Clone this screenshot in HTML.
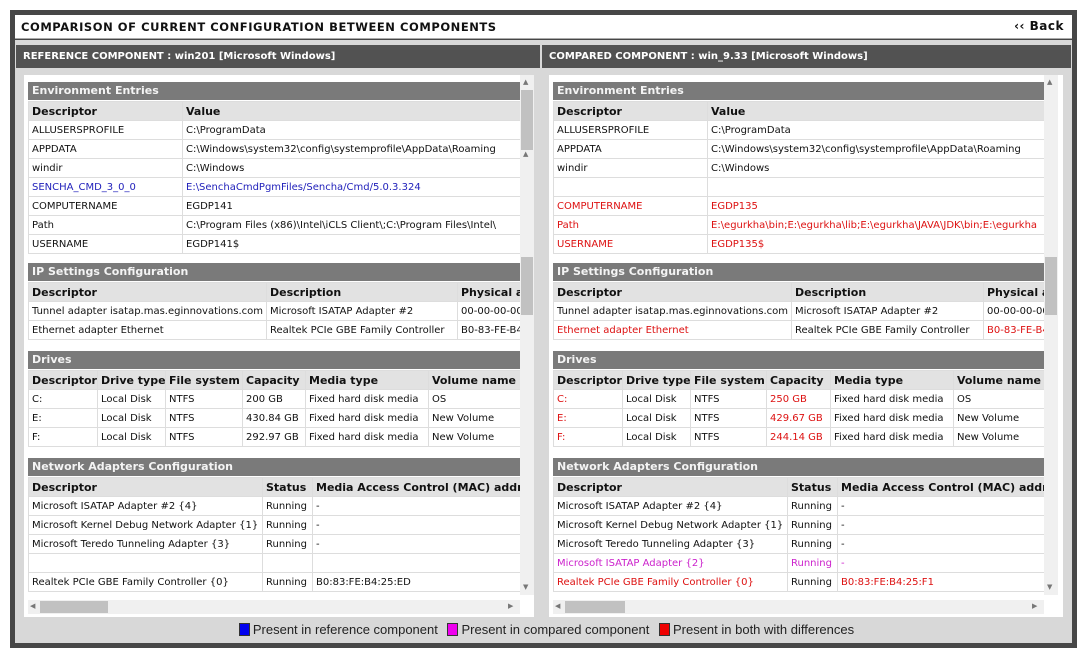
<!DOCTYPE html>
<html><head><meta charset="utf-8">
<style>
*{box-sizing:border-box;margin:0;padding:0}
body{width:1087px;height:657px;background:#fff;font-family:"DejaVu Sans","Liberation Sans",sans-serif;position:relative;overflow:hidden}
.outer{position:absolute;left:10px;top:10px;width:1067px;height:638px;background:#474747}
.hdr{position:absolute;left:15px;top:15px;width:1057px;height:24px;background:#fff;border-bottom:1px solid #aaa}
.hdr .t{position:absolute;left:6px;top:5px;font-size:11.5px;font-weight:bold;letter-spacing:0.55px;color:#111}
.hdr .b{position:absolute;right:8px;top:4px;font-size:12px;font-weight:bold;color:#111;letter-spacing:.5px}
.body{position:absolute;left:15px;top:40px;width:1057px;height:603px;background:#d8d8d8}
.panel{position:absolute;top:45px;height:572px;background:#d8d8d8}
.ph{position:absolute;left:0;top:0;right:0;height:23px;background:#525252;color:#fff;font-size:10px;font-weight:bold;padding:6px 0 0 7px}
.sc{position:absolute;top:30px;background:#fff;height:542px;overflow:hidden}
.clip{position:absolute;left:4px;top:0;overflow:hidden;height:520px}
.sec{position:absolute;left:0;height:18px;background:#7a7a7a;color:#f4f4f4;font-size:11px;font-weight:bold;padding:2px 0 0 4px;white-space:nowrap}
table{position:absolute;left:0;border-collapse:collapse;table-layout:fixed;font-size:10px;color:#111}
td{height:19px;border:1px solid #ddd;padding:0 3px;white-space:nowrap;overflow:hidden}
tr.h td{background:#e2e2e2;font-weight:bold;font-size:11px}
.bl{color:#2222bb}.rd{color:#dd1111}.mg{color:#cc22cc}
.vs{position:absolute;width:14px;background:#f0f0f0}
.th{position:absolute;background:#c1c1c1}
.ar{position:absolute;font-size:7px;color:#777}
.hs{position:absolute;height:14px;background:#f0f0f0}
.leg{position:absolute;top:622px;left:0;width:1087px;text-align:center;font-family:"Liberation Sans",sans-serif;font-size:13px;color:#222}
.leg span.s{display:inline-block;width:11px;height:13px;vertical-align:-2px;margin:0 3px 0 6px;border:1px solid #333}
</style></head><body>
<div class="outer"></div>
<div class="body"></div>
<div class="hdr"><div class="t">COMPARISON OF CURRENT CONFIGURATION BETWEEN COMPONENTS</div><div class="b">&#8249;&#8249; Back</div></div>

<!-- LEFT PANEL -->
<div class="panel" style="left:16px;width:524px">
 <div class="ph">REFERENCE COMPONENT : win201 [Microsoft Windows]</div>
 <div class="sc" style="left:8px;width:510px">
  <div class="clip" style="width:492px">
   <div class="sec" style="top:7px;width:492px">Environment Entries</div>
   <table style="top:26px;width:492px"><col style="width:154px"><col style="width:338px">
    <tr class="h"><td>Descriptor</td><td>Value</td></tr>
    <tr><td>ALLUSERSPROFILE</td><td>C:\ProgramData</td></tr>
    <tr><td>APPDATA</td><td>C:\Windows\system32\config\systemprofile\AppData\Roaming</td></tr>
    <tr><td>windir</td><td>C:\Windows</td></tr>
    <tr class="bl"><td>SENCHA_CMD_3_0_0</td><td>E:\SenchaCmdPgmFiles/Sencha/Cmd/5.0.3.324</td></tr>
    <tr><td>COMPUTERNAME</td><td>EGDP141</td></tr>
    <tr><td>Path</td><td>C:\Program Files (x86)\Intel\iCLS Client\;C:\Program Files\Intel\</td></tr>
    <tr><td>USERNAME</td><td>EGDP141$</td></tr>
   </table>
   <div class="sec" style="top:188px;width:492px">IP Settings Configuration</div>
   <table style="top:207px;width:540px"><col style="width:238px"><col style="width:191px"><col style="width:111px">
    <tr class="h"><td>Descriptor</td><td>Description</td><td>Physical address</td></tr>
    <tr><td>Tunnel adapter isatap.mas.eginnovations.com</td><td>Microsoft ISATAP Adapter #2</td><td>00-00-00-00-00</td></tr>
    <tr><td>Ethernet adapter Ethernet</td><td>Realtek PCIe GBE Family Controller</td><td>B0-83-FE-B4</td></tr>
   </table>
   <div class="sec" style="top:276px;width:492px">Drives</div>
   <table style="top:295px;width:520px"><col style="width:69px"><col style="width:68px"><col style="width:77px"><col style="width:63px"><col style="width:123px"><col style="width:120px">
    <tr class="h"><td>Descriptor</td><td>Drive type</td><td>File system</td><td>Capacity</td><td>Media type</td><td>Volume name</td></tr>
    <tr><td>C:</td><td>Local Disk</td><td>NTFS</td><td>200 GB</td><td>Fixed hard disk media</td><td>OS</td></tr>
    <tr><td>E:</td><td>Local Disk</td><td>NTFS</td><td>430.84 GB</td><td>Fixed hard disk media</td><td>New Volume</td></tr>
    <tr><td>F:</td><td>Local Disk</td><td>NTFS</td><td>292.97 GB</td><td>Fixed hard disk media</td><td>New Volume</td></tr>
   </table>
   <div class="sec" style="top:383px;width:492px">Network Adapters Configuration</div>
   <table style="top:402px;width:560px"><col style="width:234px"><col style="width:50px"><col style="width:276px">
    <tr class="h"><td>Descriptor</td><td>Status</td><td>Media Access Control (MAC) address</td></tr>
    <tr><td>Microsoft ISATAP Adapter #2 {4}</td><td>Running</td><td>-</td></tr>
    <tr><td>Microsoft Kernel Debug Network Adapter {1}</td><td>Running</td><td>-</td></tr>
    <tr><td>Microsoft Teredo Tunneling Adapter {3}</td><td>Running</td><td>-</td></tr>
    <tr><td></td><td></td><td></td></tr>
    <tr><td>Realtek PCIe GBE Family Controller {0}</td><td>Running</td><td>B0:83:FE:B4:25:ED</td></tr>
   </table>
  </div>
  <div class="vs" style="left:496px;top:0;height:520px"></div>
  <div class="th" style="left:497px;top:15px;width:12px;height:60px"></div>
  <div class="th" style="left:497px;top:182px;width:12px;height:58px"></div>
  <div class="ar" style="left:499px;top:3px">&#9650;</div>
  <div class="ar" style="left:499px;top:75px">&#9650;</div>
  <div class="ar" style="left:499px;top:508px">&#9660;</div>
  <div class="hs" style="left:4px;top:525px;width:492px"></div>
  <div class="th" style="left:16px;top:526px;width:68px;height:12px"></div>
  <div class="ar" style="left:6px;top:527px">&#9664;</div>
  <div class="ar" style="left:484px;top:527px">&#9654;</div>
 </div>
</div>

<!-- RIGHT PANEL -->
<div class="panel" style="left:542px;width:529px">
 <div class="ph">COMPARED COMPONENT : win_9.33 [Microsoft Windows]</div>
 <div class="sc" style="left:7px;width:514px">
  <div class="clip" style="width:491px">
   <div class="sec" style="top:7px;width:491px">Environment Entries</div>
   <table style="top:26px;width:500px"><col style="width:154px"><col style="width:346px">
    <tr class="h"><td>Descriptor</td><td>Value</td></tr>
    <tr><td>ALLUSERSPROFILE</td><td>C:\ProgramData</td></tr>
    <tr><td>APPDATA</td><td>C:\Windows\system32\config\systemprofile\AppData\Roaming</td></tr>
    <tr><td>windir</td><td>C:\Windows</td></tr>
    <tr><td></td><td></td></tr>
    <tr class="rd"><td>COMPUTERNAME</td><td>EGDP135</td></tr>
    <tr class="rd"><td>Path</td><td>E:\egurkha\bin;E:\egurkha\lib;E:\egurkha\JAVA\JDK\bin;E:\egurkha</td></tr>
    <tr class="rd"><td>USERNAME</td><td>EGDP135$</td></tr>
   </table>
   <div class="sec" style="top:188px;width:491px">IP Settings Configuration</div>
   <table style="top:207px;width:540px"><col style="width:238px"><col style="width:192px"><col style="width:110px">
    <tr class="h"><td>Descriptor</td><td>Description</td><td>Physical address</td></tr>
    <tr><td>Tunnel adapter isatap.mas.eginnovations.com</td><td>Microsoft ISATAP Adapter #2</td><td>00-00-00-00-00</td></tr>
    <tr><td class="rd">Ethernet adapter Ethernet</td><td>Realtek PCIe GBE Family Controller</td><td class="rd">B0-83-FE-B4</td></tr>
   </table>
   <div class="sec" style="top:276px;width:491px">Drives</div>
   <table style="top:295px;width:520px"><col style="width:69px"><col style="width:68px"><col style="width:76px"><col style="width:64px"><col style="width:123px"><col style="width:120px">
    <tr class="h"><td>Descriptor</td><td>Drive type</td><td>File system</td><td>Capacity</td><td>Media type</td><td>Volume name</td></tr>
    <tr><td class="rd">C:</td><td>Local Disk</td><td>NTFS</td><td class="rd">250 GB</td><td>Fixed hard disk media</td><td>OS</td></tr>
    <tr><td class="rd">E:</td><td>Local Disk</td><td>NTFS</td><td class="rd">429.67 GB</td><td>Fixed hard disk media</td><td>New Volume</td></tr>
    <tr><td class="rd">F:</td><td>Local Disk</td><td>NTFS</td><td class="rd">244.14 GB</td><td>Fixed hard disk media</td><td>New Volume</td></tr>
   </table>
   <div class="sec" style="top:383px;width:491px">Network Adapters Configuration</div>
   <table style="top:402px;width:560px"><col style="width:234px"><col style="width:50px"><col style="width:276px">
    <tr class="h"><td>Descriptor</td><td>Status</td><td>Media Access Control (MAC) address</td></tr>
    <tr><td>Microsoft ISATAP Adapter #2 {4}</td><td>Running</td><td>-</td></tr>
    <tr><td>Microsoft Kernel Debug Network Adapter {1}</td><td>Running</td><td>-</td></tr>
    <tr><td>Microsoft Teredo Tunneling Adapter {3}</td><td>Running</td><td>-</td></tr>
    <tr class="mg"><td>Microsoft ISATAP Adapter {2}</td><td>Running</td><td>-</td></tr>
    <tr><td class="rd">Realtek PCIe GBE Family Controller {0}</td><td>Running</td><td class="rd">B0:83:FE:B4:25:F1</td></tr>
   </table>
  </div>
  <div class="vs" style="left:495px;top:0;height:520px"></div>
  <div class="th" style="left:496px;top:182px;width:12px;height:58px"></div>
  <div class="ar" style="left:498px;top:3px">&#9650;</div>
  <div class="ar" style="left:498px;top:508px">&#9660;</div>
  <div class="hs" style="left:4px;top:525px;width:491px"></div>
  <div class="th" style="left:16px;top:526px;width:60px;height:12px"></div>
  <div class="ar" style="left:6px;top:527px">&#9664;</div>
  <div class="ar" style="left:483px;top:527px">&#9654;</div>
 </div>
</div>

<div class="leg"><span class="s" style="background:#0000ee"></span>Present in reference component <span class="s" style="background:#ee00ee"></span>Present in compared component <span class="s" style="background:#ee0000"></span>Present in both with differences</div>
</body></html>
